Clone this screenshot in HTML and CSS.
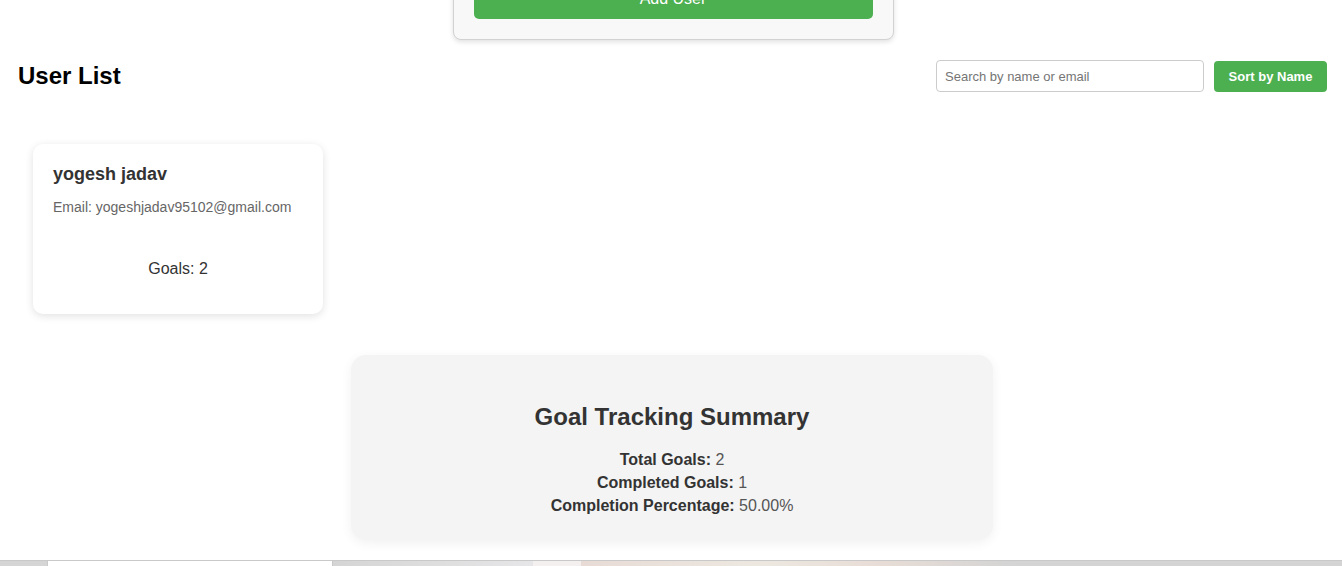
FILE: index.html
```html
<!DOCTYPE html>
<html lang="en">
<head>
<meta charset="utf-8">
<title>Goal Tracker</title>
<link rel="stylesheet" href="styles.css">
</head>
<body>
  <form class="user-form">
    <button type="button" class="add-btn">Add User</button>
  </form>

  <div class="list-header">
    <h2 class="list-title">User List</h2>
    <div class="controls">
      <input class="search" type="text" placeholder="Search by name or email">
      <button type="button" class="sort-btn">Sort by Name</button>
    </div>
  </div>

  <div class="user-grid">
    <div class="user-card">
      <h3 class="user-name">yogesh jadav</h3>
      <p class="user-email">Email: yogeshjadav95102@gmail.com</p>
      <p class="user-goals">Goals: 2</p>
    </div>
  </div>

  <section class="summary">
    <h2 class="summary-title">Goal Tracking Summary</h2>
    <p class="summary-line"><strong>Total Goals:</strong> 2</p>
    <p class="summary-line"><strong>Completed Goals:</strong> 1</p>
    <p class="summary-line"><strong>Completion Percentage:</strong> 50.00%</p>
  </section>

  <div class="bottom-strip">
    <div class="strip-tab"></div>
  </div>
</body>
</html>
```

FILE: styles.css
```css
html, body {
  margin: 0;
  padding: 0;
  background: #ffffff;
  font-family: "Liberation Sans", Arial, sans-serif;
  overflow: hidden;
}

.user-form {
  box-sizing: border-box;
  width: 441px;
  margin: -42px auto 0;
  padding: 20px;
  background: #f8f8f8;
  border: 1px solid #d2d2d2;
  border-radius: 8px;
  box-shadow: 0 2px 5px rgba(0, 0, 0, 0.12);
  position: relative;
  left: 2px;
}

.add-btn {
  display: block;
  width: 100%;
  height: 40px;
  border: none;
  border-radius: 5px;
  background: #4caf50;
  color: #ffffff;
  font-family: "Liberation Sans", Arial, sans-serif;
  font-size: 16px;
}

.list-header {
  display: flex;
  justify-content: space-between;
  align-items: center;
  height: 32px;
  margin-top: 20px;
  padding: 0 15px 0 18px;
}

.list-title {
  margin: 0 0 1px;
  font-size: 24px;
  font-weight: bold;
  color: #000000;
}

.controls {
  display: flex;
  align-items: center;
  gap: 10px;
}

.search {
  box-sizing: border-box;
  width: 268px;
  height: 32px;
  padding: 0 8px;
  border: 1px solid #cccccc;
  border-radius: 4px;
  font-family: "Liberation Sans", Arial, sans-serif;
  font-size: 13px;
  color: #333333;
  outline: none;
}

.search::placeholder {
  color: #757575;
}

.sort-btn {
  box-sizing: border-box;
  width: 113px;
  height: 31px;
  border: none;
  border-radius: 4px;
  background: #4caf50;
  color: #ffffff;
  font-family: "Liberation Sans", Arial, sans-serif;
  font-size: 13px;
  font-weight: bold;
}

.user-grid {
  display: flex;
  gap: 20px;
  margin-top: 52px;
  padding-left: 33px;
}

.user-card {
  box-sizing: border-box;
  width: 290px;
  height: 170px;
  padding: 20px;
  background: #ffffff;
  border-radius: 10px;
  box-shadow: 0 2px 8px rgba(0, 0, 0, 0.12);
}

.user-name {
  margin: 0 0 14px;
  font-size: 18px;
  font-weight: bold;
  color: #333333;
}

.user-email {
  margin: 0 0 45px;
  font-size: 14px;
  color: #666666;
}

.user-goals {
  margin: 0;
  text-align: center;
  font-size: 16px;
  color: #333333;
}

.summary {
  box-sizing: border-box;
  width: 642px;
  height: 185px;
  margin: 41px auto 0;
  padding: 20px 20px 0;
  background: #f4f4f4;
  border-radius: 15px;
  box-shadow: 0 3px 12px rgba(0, 0, 0, 0.06);
  text-align: center;
  position: relative;
  left: 1px;
}

.summary-title {
  margin: 28px 0 17px;
  font-size: 24px;
  font-weight: bold;
  color: #333333;
}

.summary-line {
  margin: 0;
  font-size: 16px;
  line-height: 23px;
  color: #555555;
}

.summary-line strong {
  color: #333333;
}

.bottom-strip {
  margin-top: 20px;
  height: 6px;
  border-top: 1px solid #c9c9c9;
  background: linear-gradient(to right,
    #d5d5d5 0px, #d5d5d5 333px,
    #e6e6e8 533px, #f5f0f0 533px, #f5f0f0 581px,
    #e8dbd6 581px, #ece8e0 760px, #e8ddd6 880px,
    #d4d4d4 1010px, #d4d4d4 100%);
  display: flex;
}

.strip-tab {
  margin-left: 47px;
  width: 286px;
  height: 6px;
  margin-top: -1px;
  box-sizing: border-box;
  background: #ffffff;
  border: 1px solid #c9c9c9;
  border-bottom: none;
}
```
